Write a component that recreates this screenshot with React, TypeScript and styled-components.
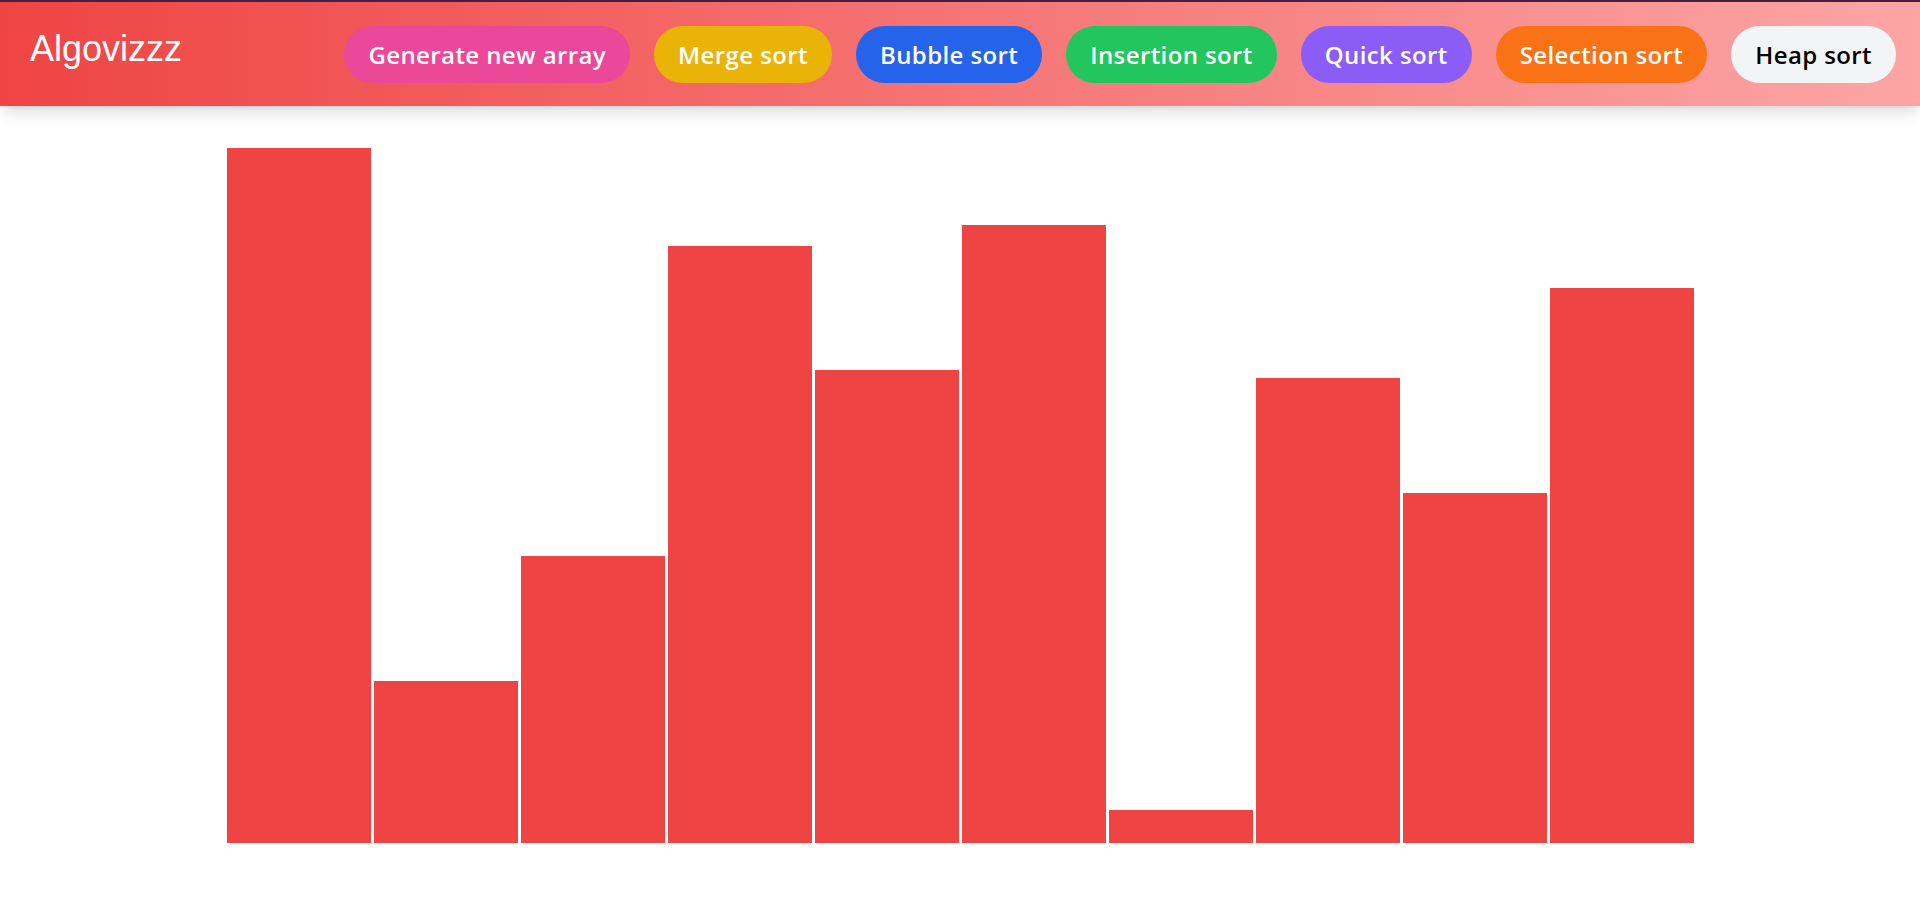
import React from "react";
import styled, { createGlobalStyle } from "styled-components";

const Global = createGlobalStyle`
  html, body { margin: 0; padding: 0; background: #ffffff; }
  body { font-family: "Open Sans", "Liberation Sans", sans-serif; }
  * { box-sizing: border-box; }
`;

const Header = styled.header`
  display: flex;
  align-items: center;
  justify-content: space-between;
  height: 106px;
  padding: 0 24px 0 30px;
  border-top: 2px solid #4a1c3e;
  background: linear-gradient(90deg, #ef4444 0%, #fca5a5 100%);
  box-shadow: 0 10px 15px -3px rgba(0, 0, 0, 0.12), 0 4px 6px -4px rgba(0, 0, 0, 0.1);
  position: relative;
  z-index: 1;
`;

const Logo = styled.div`
  font-family: "Liberation Sans", Arial, sans-serif;
  font-size: 36px;
  line-height: 40px;
  color: #ffffff;
  margin-top: -10px;
`;

const Nav = styled.nav`
  display: flex;
  align-items: center;
  gap: 24px;
  margin-top: 1px;
`;

const Pill = styled.button<{ $bg: string; $fg: string }>`
  font-family: "Open Sans", sans-serif;
  font-weight: 600;
  font-size: 24px;
  line-height: 32px;
  letter-spacing: 0.4px;
  height: 57px;
  padding: 0 24px;
  border: none;
  border-radius: 9999px;
  background: ${(p) => p.$bg};
  color: ${(p) => p.$fg};
  cursor: pointer;
  white-space: nowrap;
`;

const Chart = styled.main`
  display: flex;
  justify-content: center;
  align-items: flex-end;
  height: 695px;
  margin-top: 42px;
`;

const Bar = styled.div`
  width: 144px;
  margin: 0 1.5px;
  background: #ef4444;
`;

const buttons = [
  { label: "Generate new array", bg: "#ec4899", fg: "#ffffff" },
  { label: "Merge sort", bg: "#eab308", fg: "#ffffff" },
  { label: "Bubble sort", bg: "#2563eb", fg: "#ffffff" },
  { label: "Insertion sort", bg: "#22c55e", fg: "#ffffff" },
  { label: "Quick sort", bg: "#8b5cf6", fg: "#ffffff" },
  { label: "Selection sort", bg: "#f97316", fg: "#ffffff" },
  { label: "Heap sort", bg: "#f3f4f6", fg: "#000000" },
];

const values = [695, 162, 287, 597, 473, 618, 33, 465, 350, 555];

export default function App() {
  return (
    <>
      <Global />
      <Header>
        <Logo>Algovizzz</Logo>
        <Nav>
          {buttons.map((b) => (
            <Pill key={b.label} $bg={b.bg} $fg={b.fg}>
              {b.label}
            </Pill>
          ))}
        </Nav>
      </Header>
      <Chart>
        {values.map((v, i) => (
          <Bar key={i} style={{ height: `${v}px` }} />
        ))}
      </Chart>
    </>
  );
}
